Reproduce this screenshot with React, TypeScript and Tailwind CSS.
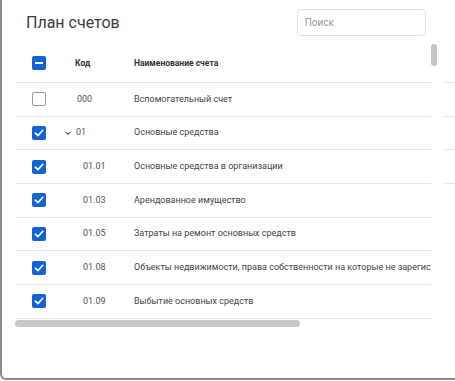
import React from "react";

type Row = {
  code: string;
  name: string;
  checked: boolean;
  level: 0 | 1;
  parent?: boolean;
  tail?: boolean;
};

const ROWS: Row[] = [
  { code: "000", name: "Вспомогательный счет", checked: false, level: 0, tail: true },
  { code: "01", name: "Основные средства", checked: true, level: 0, parent: true, tail: true },
  { code: "01.01", name: "Основные средства в организации", checked: true, level: 1, tail: true },
  { code: "01.03", name: "Арендованное имущество", checked: true, level: 1 },
  { code: "01.05", name: "Затраты на ремонт основных средств", checked: true, level: 1 },
  {
    code: "01.08",
    name: "Объекты недвижимости, права собственности на которые не зарегистрированы",
    checked: true,
    level: 1,
  },
  { code: "01.09", name: "Выбытие основных средств", checked: true, level: 1 },
];

function Checkbox({ state }: { state: "on" | "off" | "mixed" }) {
  if (state === "off") {
    return <span className="block h-[14px] w-[14px] rounded-[2px] border border-[#9a9a9a] bg-white" />;
  }
  return (
    <span className="flex h-[14px] w-[14px] items-center justify-center rounded-[2px] bg-[#1264d6]">
      {state === "mixed" ? (
        <span className="block h-[2px] w-[8px] bg-white" />
      ) : (
        <svg width="10" height="10" viewBox="0 0 10 10" fill="none">
          <path d="M1.3 5.2 L3.9 7.6 L8.8 2.3" stroke="white" strokeWidth="1.6" strokeLinecap="round" strokeLinejoin="round" />
        </svg>
      )}
    </span>
  );
}

export default function App() {
  return (
    <div className="h-[381px] w-[455px] overflow-hidden bg-white" style={{ fontFamily: "Roboto, 'Liberation Sans', sans-serif" }}>
      <div className="h-[380px] w-[470px] rounded-bl-[6px] border-b-2 border-l-2 border-[#8d8d8d] bg-white">
        {/* header */}
        <div className="flex h-[44px] items-start pt-[9px]">
          <h1 className="ml-[24px] mt-[4px] text-[16px] leading-[20px] font-normal text-[#3c3c3c]">План счетов</h1>
          <input
            placeholder="Поиск"
            className="ml-[177px] h-[27px] w-[129px] rounded-[4px] border border-[#dde3ea] px-[7px] text-[10px] text-[#333] placeholder:text-[#9a9a9a] focus:outline-none"
          />
        </div>

        <div className="flex pl-[13px]">
          {/* table */}
          <div className="w-[416px]">
            <div className="flex h-[39px] items-center border-b border-[#e6e6e6] text-[8.5px] font-bold text-[#333]">
              <div className="w-[60px] pl-[17px]">
                <Checkbox state="mixed" />
              </div>
              <div className="w-[59px] pl-[0px]">Код</div>
              <div>Наименование счета</div>
            </div>

            {ROWS.map((r) => (
              <div key={r.code} className="flex h-[33.7px] items-center border-b border-[#e6e6e6] text-[9px]">
                <div className="w-[60px] shrink-0 pl-[17px]">
                  <Checkbox state={r.checked ? "on" : "off"} />
                </div>
                <div className="flex w-[59px] shrink-0 items-center text-[#555]">
                  {r.parent ? (
                    <>
                      <svg width="8" height="8" viewBox="0 0 8 8" className="ml-[-11px] mr-[4px]">
                        <path d="M1.5 2.8 L4 5.2 L6.5 2.8" stroke="#555" strokeWidth="1.1" fill="none" />
                      </svg>
                      <span>{r.code}</span>
                    </>
                  ) : (
                    <span className={r.level === 1 ? "pl-[8px]" : "pl-[2px]"}>{r.code}</span>
                  )}
                </div>
                <div className="overflow-hidden whitespace-nowrap text-[#444]">{r.name}</div>
              </div>
            ))}

            <div className="mt-[1px] h-[7px] w-[285px] rounded-full bg-[#c8c8c8]" />
          </div>

          {/* vertical scrollbar gutter */}
          <div className="w-[13px]">
            <div className="h-[22px] w-[6px] rounded-full bg-[#c6c6c6]" />
          </div>

          {/* sibling panel edge */}
          <div className="w-[20px]">
            <div className="h-[39px] border-b border-[#e6e6e6]" />
            {ROWS.filter((r) => r.tail).map((r) => (
              <div key={r.code} className="h-[33.7px] border-b border-[#e6e6e6]" />
            ))}
          </div>
        </div>
      </div>
    </div>
  );
}
